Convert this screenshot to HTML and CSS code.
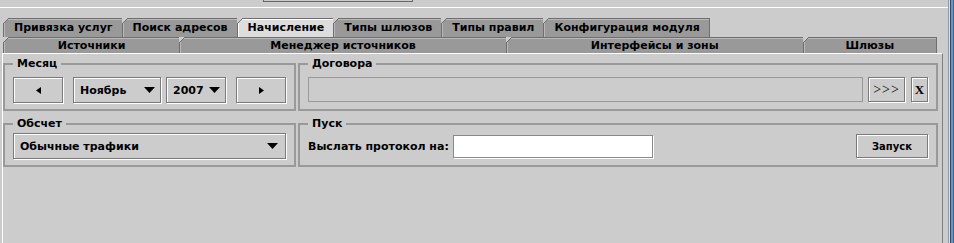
FILE: index.html
```html
<!DOCTYPE html>
<html lang="ru">
<head>
    <meta charset="UTF-8">
    <title>Начисление</title>
    <link rel="stylesheet" href="styles.css">
</head>
<body>
    <div class="window">
        <div class="main">
            <div class="topbar"><div class="topfield"></div></div>

            <div class="tabs">
                <div class="tabrow row1">
                    <div class="tab">Привязка услуг</div>
                    <div class="tab">Поиск адресов</div>
                    <div class="tab selected">Начисление</div>
                    <div class="tab">Типы шлюзов</div>
                    <div class="tab">Типы правил</div>
                    <div class="tab">Конфигурация модуля</div>
                </div>
                <div class="tabrow row2">
                    <div class="tab t-src">Источники</div>
                    <div class="tab t-mgr">Менеджер источников</div>
                    <div class="tab t-if">Интерфейсы и зоны</div>
                    <div class="tab t-gw">Шлюзы</div>
                </div>
            </div>

            <div class="panel">
                <div class="grouprow">
                    <fieldset class="group left month">
                        <legend>Месяц</legend>
                        <div class="btn arrow-btn">
                            <svg width="5" height="7" viewBox="0 0 5 7"><polygon points="5,0 0,3.5 5,7" fill="#000"/></svg>
                        </div>
                        <div class="combo month-combo">
                            <span>Ноябрь</span>
                            <svg width="11" height="6" viewBox="0 0 11 6"><polygon points="0,0 11,0 5.5,6" fill="#000"/></svg>
                        </div>
                        <div class="combo year-combo">
                            <span>2007</span>
                            <svg width="11" height="6" viewBox="0 0 11 6"><polygon points="0,0 11,0 5.5,6" fill="#000"/></svg>
                        </div>
                        <div class="btn arrow-btn">
                            <svg width="5" height="7" viewBox="0 0 5 7"><polygon points="0,0 5,3.5 0,7" fill="#000"/></svg>
                        </div>
                    </fieldset>
                    <fieldset class="group right contracts">
                        <legend>Договора</legend>
                        <div class="field disabled"></div>
                        <div class="btn serif-btn more-btn">&gt;&gt;&gt;</div>
                        <div class="btn serif-btn clear-btn">X</div>
                    </fieldset>
                </div>

                <div class="grouprow">
                    <fieldset class="group left calc">
                        <legend>Обсчет</legend>
                        <div class="combo wide-combo">
                            <span>Обычные трафики</span>
                            <svg width="11" height="6" viewBox="0 0 11 6"><polygon points="0,0 11,0 5.5,6" fill="#000"/></svg>
                        </div>
                    </fieldset>
                    <fieldset class="group right start">
                        <legend>Пуск</legend>
                        <span class="label">Выслать протокол на:</span>
                        <div class="field mail"></div>
                        <div class="btn run-btn">Запуск</div>
                    </fieldset>
                </div>
            </div>
        </div>
        <div class="edge"></div>
    </div>
</body>
</html>
```

FILE: styles.css
```css
body {
    margin: 0;
    background-color: #cccccc;
    font: bold 11px "DejaVu Sans", sans-serif;
    color: #000;
    overflow: hidden;
}
.window {
    display: flex;
    width: 954px;
    height: 243px;
}
.main {
    width: 949px;
    border-right: 1px solid #9a9a9a;
    box-sizing: border-box;
    display: flex;
    flex-direction: column;
}
.edge {
    width: 5px;
    background: linear-gradient(to right, #dddddd 0 1px, #2e4d70 1px 2px, #6f93bd 2px 4px, #44668e 4px);
}

/* top strip */
.topbar {
    height: 7px;
    border-bottom: 1px solid #fff;
}
.topfield {
    margin-left: 263px;
    width: 148px;
    height: 1px;
    border: 1px solid #666;
    border-top: none;
}

/* tabs */
.tabs {
    margin-top: 10px;
    padding: 0 12px 0 3px;
}
.tabrow {
    display: flex;
}
.row1 {
    height: 19px;
}
.row2 {
    height: 16px;
}
.tab {
    position: relative;
    box-sizing: border-box;
    background-color: #999999;
    border: 1px solid #6e6e6e;
    border-bottom: none;
    margin-right: -1px;
    box-shadow: inset 1px 1px 0 #b9b9b9;
    padding: 0 9px 0 10px;
    text-align: center;
    white-space: nowrap;
}
.row1 .tab {
    line-height: 17px;
}
.row2 .tab {
    line-height: 15px;
    padding: 0;
}
.tab::before {
    content: "";
    position: absolute;
    top: -1px;
    left: -1px;
    width: 6px;
    height: 6px;
    background: linear-gradient(to bottom right, #cccccc 45%, #6e6e6e 50%, transparent 58%);
}
.tab.selected {
    background-color: #dddddd;
    box-shadow: inset 1px 1px 0 #fff;
}
.t-src { flex: 176; }
.t-mgr { flex: 327; }
.t-if { flex: 297; }
.t-gw { flex: 133; }

/* content panel */
.panel {
    flex: 1;
    margin-left: 2px;
    width: 941px;
    box-sizing: border-box;
    border-top: 1px solid #fff;
    border-left: 1px solid #fff;
    border-right: 1px solid #808080;
    padding: 3px 4px 0 0;
}
.grouprow {
    display: flex;
    gap: 2px;
    margin-bottom: 6px;
}
.group {
    margin: 0;
    min-width: 0;
    box-sizing: border-box;
    border: 2px solid #999999;
    padding: 7px 8px 6px 8px;
    display: flex;
    align-items: flex-start;
}
.group legend {
    padding: 0 4px;
    line-height: 13px;
}
.group.left {
    width: 293px;
}
.group.right {
    width: 640px;
}
.calc, .start {
    padding-top: 3px;
}
.start {
    align-items: center;
}

/* controls */
.btn, .combo {
    box-sizing: border-box;
    height: 26px;
    border: 1px solid #7a7a7a;
    box-shadow: inset 1px 1px 0 #fff, 1px 1px 0 #fff;
    background-color: #cccccc;
}
.btn {
    display: flex;
    align-items: center;
    justify-content: center;
}
.combo {
    display: flex;
    align-items: center;
    justify-content: space-between;
    padding: 0 5px 0 6px;
}
.arrow-btn {
    width: 50px;
}
.month-combo {
    width: 88px;
    margin: 0 5px 0 10px;
}
.year-combo {
    width: 60px;
    margin-right: 10px;
}
.wide-combo {
    flex: 1;
    padding-right: 7px;
}
.field {
    box-sizing: border-box;
    height: 25px;
    border: 1px solid #999999;
}
.field.disabled {
    flex: 1;
    margin-right: 5px;
}
.serif-btn {
    height: 25px;
    font-family: "Liberation Serif", serif;
    color: #000;
}
.more-btn {
    width: 37px;
    font-weight: normal;
    font-size: 14px;
    letter-spacing: 1px;
    margin-right: 6px;
}
.clear-btn {
    width: 17px;
    font-size: 13px;
}
.label {
    margin-right: 4px;
}
.field.mail {
    width: 200px;
    height: 23px;
    background-color: #fff;
    border-color: #8a8a8a;
    box-shadow: 1px 1px 0 #fff;
}
.run-btn {
    width: 72px;
    height: 24px;
    margin-left: auto;
    font-size: 10px;
}
```
